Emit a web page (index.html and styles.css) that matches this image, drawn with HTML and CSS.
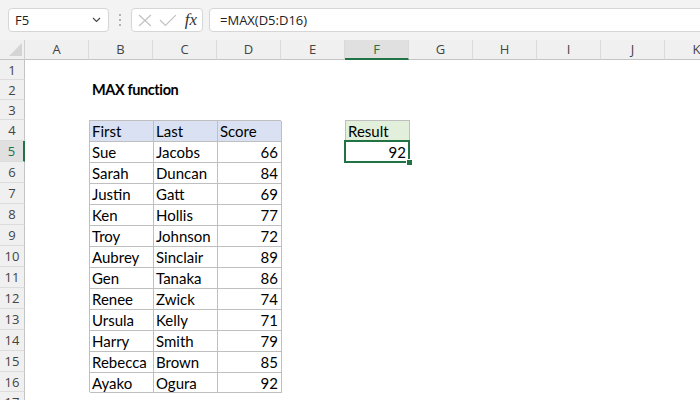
FILE: index.html
```html
<!DOCTYPE html>
<html lang="en">
<head>
  <meta charset="UTF-8" />
  <title>MAX function</title>
  <link rel="stylesheet" href="styles.css">
</head>
<body>

<div class="toolbar">
  <div class="namebox">
    <span>F5</span>
    <svg width="9" height="6" viewBox="0 0 9 6"><path d="M1 1 L4.5 4.5 L8 1" fill="none" stroke="#444" stroke-width="1.1"/></svg>
  </div>
  <div class="grip"><i></i><i></i><i></i></div>
  <div class="fxbox">
    <svg width="14" height="13" viewBox="0 0 14 13"><path d="M1 1 L13 12 M13 1 L1 12" stroke="#c2c2c2" stroke-width="1.2" fill="none"/></svg>
    <svg width="18" height="13" viewBox="0 0 18 13"><path d="M1 6 L6.5 11.5 L17 1" stroke="#c2c2c2" stroke-width="1.2" fill="none"/></svg>
    <span class="fx">fx</span>
  </div>
  <div class="formula">=MAX(D5:D16)</div>
</div>

<div class="colheads" id="colheads">
  <div class="corner"><span class="tri"></span></div>
</div>

<div class="sheet">
  <div class="rowheads" id="rowheads"></div>
  <div class="cells">
    <div class="title">MAX function</div>
    <div class="data" id="data"></div>
    <div class="result">
      <div class="result-head">Result</div>
      <div class="result-val">92<span class="handle"></span></div>
    </div>
  </div>
</div>

<script>
  const cols = 'ABCDEFGHIJK'.split('');
  const colheads = document.getElementById('colheads');
  cols.forEach(c => {
    const d = document.createElement('div');
    d.className = 'colhead' + (c === 'F' ? ' active' : '');
    d.textContent = c;
    colheads.appendChild(d);
  });

  const rowheads = document.getElementById('rowheads');
  for (let r = 1; r <= 17; r++) {
    const d = document.createElement('div');
    d.className = 'rowhead' + (r === 5 ? ' active' : '');
    d.textContent = r;
    rowheads.appendChild(d);
  }

  const people = [
    ['Sue', 'Jacobs', 66],
    ['Sarah', 'Duncan', 84],
    ['Justin', 'Gatt', 69],
    ['Ken', 'Hollis', 77],
    ['Troy', 'Johnson', 72],
    ['Aubrey', 'Sinclair', 89],
    ['Gen', 'Tanaka', 86],
    ['Renee', 'Zwick', 74],
    ['Ursula', 'Kelly', 71],
    ['Harry', 'Smith', 79],
    ['Rebecca', 'Brown', 85],
    ['Ayako', 'Ogura', 92]
  ];

  const data = document.getElementById('data');
  ['First', 'Last', 'Score'].forEach(h => {
    const d = document.createElement('div');
    d.className = 'cell head';
    d.textContent = h;
    data.appendChild(d);
  });
  people.forEach(p => {
    p.forEach((v, i) => {
      const d = document.createElement('div');
      d.className = 'cell' + (i === 2 ? ' num' : '');
      d.textContent = v;
      data.appendChild(d);
    });
  });
</script>

</body>
</html>
```

FILE: styles.css
```css
body {
  margin: 0;
  width: 700px;
  height: 400px;
  overflow: hidden;
  background: #fff;
  font-family: Lato, 'Noto Sans', sans-serif;
  color: #000;
}

/* Formula bar */
.toolbar {
  height: 40px;
  background: #f3f3f3;
  display: flex;
  align-items: center;
  padding-left: 8px;
  font-family: 'Open Sans', sans-serif;
  font-size: 13px;
  color: #222;
}

.namebox, .fxbox, .formula {
  height: 24px;
  box-sizing: border-box;
  background: #fff;
  border: 1px solid #d6d6d6;
  border-radius: 4px;
  display: flex;
  align-items: center;
  flex: none;
}

.namebox {
  width: 101px;
  justify-content: space-between;
  padding: 0 7px 0 6px;
}

.grip {
  width: 22px;
  flex: none;
  display: flex;
  flex-direction: column;
  align-items: center;
  gap: 3px;
}

.grip i {
  width: 2px;
  height: 2px;
  background: #9a9a9a;
  border-radius: 1px;
}

.fxbox {
  width: 72px;
  padding: 0 5px 0 6px;
  gap: 7px;
}

.fx {
  font-family: 'Liberation Serif', serif;
  font-style: italic;
  font-size: 17px;
  color: #333;
  margin-left: 1px;
}

.formula {
  flex: 1;
  margin-left: 6px;
  margin-right: -10px;
  padding-left: 10px;
}

/* Column headers */
.colheads {
  display: flex;
  height: 20px;
  background: #f0f0f0;
  font-family: 'Open Sans', sans-serif;
  font-size: 13px;
  color: #444;
}

.corner {
  width: 25px;
  flex: none;
  position: relative;
  box-sizing: border-box;
  border-right: 1px solid #d0d0d0;
  border-bottom: 1px solid #c4c4c4;
}

.tri {
  position: absolute;
  right: 2px;
  bottom: 3px;
  width: 13px;
  height: 13px;
  background: #d4d4d4;
  clip-path: polygon(100% 0, 100% 100%, 0 100%);
}

.colhead {
  width: 64px;
  flex: none;
  box-sizing: border-box;
  border-right: 1px solid #dadada;
  border-bottom: 1px solid #c4c4c4;
  text-align: center;
  line-height: 19px;
}

.colhead.active {
  background: #e0e0e0;
  color: #217346;
  border-bottom: 2px solid #217346;
}

/* Sheet */
.sheet {
  display: flex;
}

.rowheads, .cells {
  display: grid;
  flex: none;
  grid-template-rows: repeat(3, 20px) repeat(12, 21px) 20px 20px;
}

.rowheads {
  width: 25px;
  background: #f0f0f0;
  font-family: 'Open Sans', sans-serif;
  font-size: 13px;
  color: #444;
}

.rowhead {
  box-sizing: border-box;
  border-right: 1px solid #c4c4c4;
  border-bottom: 1px solid #dcdcdc;
  display: flex;
  align-items: center;
  justify-content: center;
}

.rowhead.active {
  background: #e0e0e0;
  color: #217346;
  border-right: 2px solid #217346;
}

.cells {
  grid-template-columns: repeat(11, 64px);
  font-size: 15px;
}

.title {
  grid-column: 2 / span 3;
  grid-row: 2;
  font-weight: bold;
  font-size: 14.5px;
  letter-spacing: -0.4px;
  padding-left: 3px;
  line-height: 20px;
}

.data {
  grid-column: 2 / span 3;
  grid-row: 4 / span 13;
  display: grid;
  grid-template-columns: repeat(3, 64px);
  grid-template-rows: repeat(12, 21px) 20px;
  box-shadow: 1px 1px 0 #bfbfbf;
}

.cell {
  padding: 0 3px;
  box-shadow: inset 1px 1px 0 #bfbfbf;
  display: flex;
  align-items: center;
  padding-top: 1px;
  white-space: nowrap;
}

.cell.head {
  background: #d9e1f2;
}

.cell.num {
  justify-content: flex-end;
}

.result {
  grid-column: 6;
  grid-row: 4 / span 2;
  display: grid;
  grid-template-rows: 21px 21px;
}

.result-head {
  background: #e2efda;
  box-shadow: inset 1px 1px 0 #bfbfbf, 1px 0 0 #bfbfbf;
  padding: 1px 3px 0;
  display: flex;
  align-items: center;
}

.result-val {
  position: relative;
  display: flex;
  align-items: center;
  justify-content: flex-end;
  padding: 1px 3px 0;
}

.result-val::before {
  content: '';
  position: absolute;
  inset: -1px;
  border: 2px solid #217346;
}

.handle {
  position: absolute;
  right: -4px;
  bottom: -4px;
  width: 5px;
  height: 5px;
  background: #217346;
  border: 1px solid #fff;
}
```
